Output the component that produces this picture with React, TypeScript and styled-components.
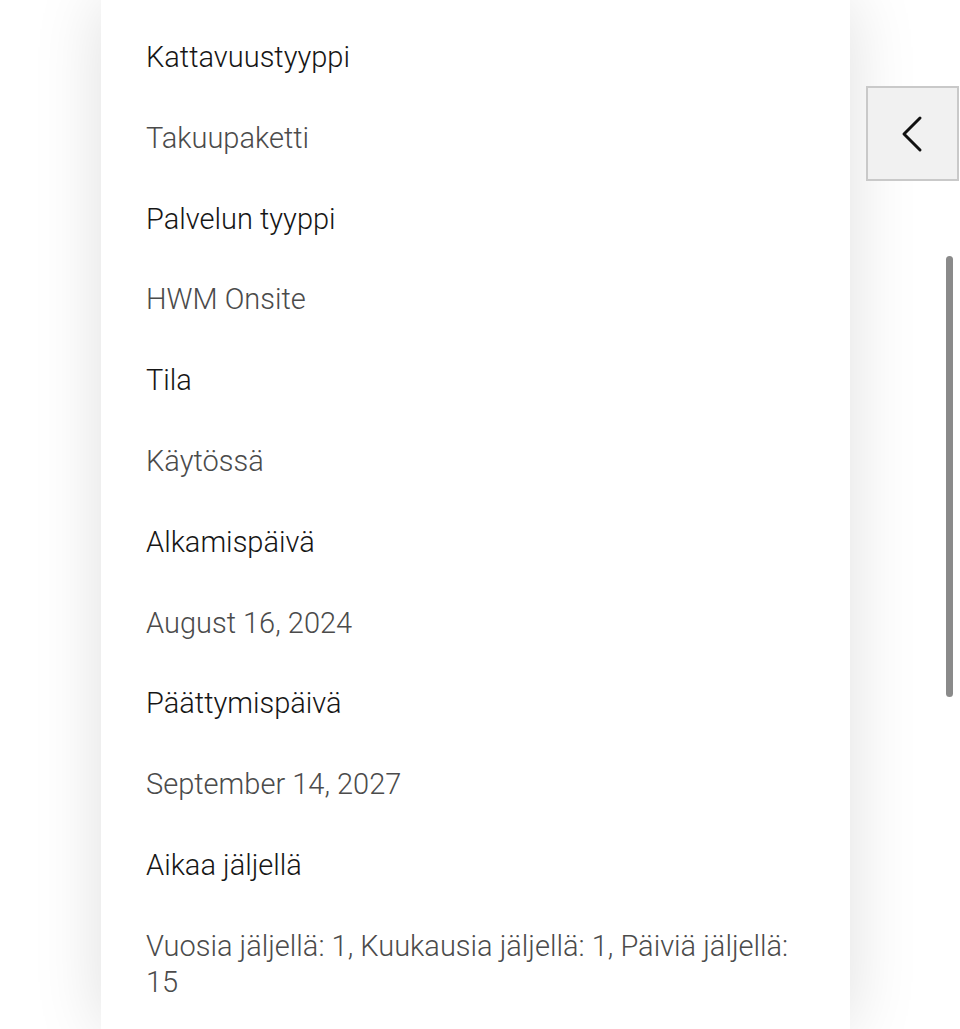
import React from "react";
import styled, { createGlobalStyle } from "styled-components";

const GlobalStyle = createGlobalStyle`
  html, body {
    margin: 0;
    padding: 0;
    background: #ffffff;
    height: 100%;
    overflow: hidden;
  }
  #root { height: 100%; }
`;

const Page = styled.div`
  position: relative;
  width: 960px;
  height: 1029px;
  background: #ffffff;
  overflow: hidden;
  display: flex;
  font-family: Roboto, "Noto Sans", sans-serif;
`;

const Panel = styled.main`
  margin-left: 101px;
  width: 749px;
  height: 100%;
  background: #ffffff;
  box-shadow: 0 0 64px rgba(0, 0, 0, 0.13);
  box-sizing: border-box;
  padding: 39px 45px 0 45px;
  display: flex;
  flex-direction: column;
  gap: 44.8px;
`;

const Label = styled.div<{ $value?: boolean }>`
  font-size: 29px;
  line-height: 36px;
  font-weight: 300;
  color: ${(p) => (p.$value ? "#4b4b4b" : "#161616")};
  max-width: 650px;
`;

const Side = styled.aside`
  position: relative;
  flex: 1;
`;

const BackButton = styled.button`
  position: absolute;
  left: 16px;
  top: 86px;
  width: 93px;
  height: 95px;
  box-sizing: border-box;
  border: 2px solid #c9c9c9;
  background: #f1f1f1;
  display: flex;
  align-items: center;
  justify-content: center;
  padding: 0;
`;

const ScrollThumb = styled.div`
  position: absolute;
  left: 96px;
  top: 256px;
  width: 7px;
  height: 441px;
  border-radius: 4px;
  background: #8a8a8a;
`;

const rows: [string, string][] = [
  ["Kattavuustyyppi", "Takuupaketti"],
  ["Palvelun tyyppi", "HWM Onsite"],
  ["Tila", "Käytössä"],
  ["Alkamispäivä", "August 16, 2024"],
  ["Päättymispäivä", "September 14, 2027"],
  ["Aikaa jäljellä", "Vuosia jäljellä: 1, Kuukausia jäljellä: 1, Päiviä jäljellä: 15"],
];

export default function App() {
  return (
    <>
      <GlobalStyle />
      <Page>
        <Panel>
          {rows.map(([k, v]) => (
            <React.Fragment key={k}>
              <Label>{k}</Label>
              <Label $value>{v}</Label>
            </React.Fragment>
          ))}
        </Panel>
        <Side>
          <BackButton aria-label="Takaisin">
            <svg width="24" height="40" viewBox="0 0 24 40" fill="none">
              <path d="M19 4 L3 20 L19 36" stroke="#111" strokeWidth="3" strokeLinecap="round" strokeLinejoin="round" />
            </svg>
          </BackButton>
          <ScrollThumb />
        </Side>
      </Page>
    </>
  );
}
